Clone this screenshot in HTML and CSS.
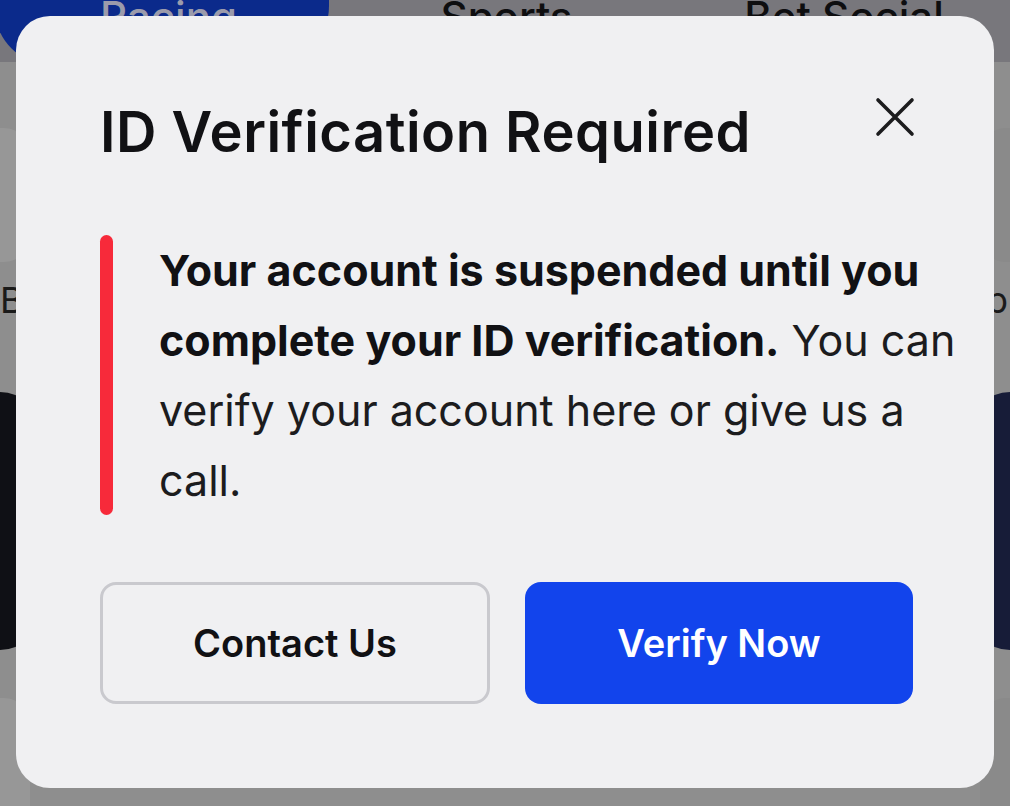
FILE: index.html
```html
<!DOCTYPE html>
<html lang="en">
<head>
<meta charset="utf-8">
<title>ID Verification Required</title>
<link rel="stylesheet" href="styles.css">
</head>
<body>
<div class="app">
  <div class="tabs">
    <div class="tab tab-active">Racing</div>
    <div class="tab">Sports</div>
    <div class="tab tab-wide">Bet Social</div>
  </div>
  <div class="cards">
    <div class="tile tile-left"></div>
    <div class="tile tile-right"><span class="tile-icon"></span></div>
  </div>
  <div class="labels">
    <span class="label label-left">Be</span>
    <span class="label label-right">b</span>
  </div>
  <div class="banners">
    <div class="banner banner-left"></div>
    <div class="banner banner-right"></div>
  </div>
  <div class="cards cards-bottom">
    <div class="tile tile-left"></div>
    <div class="tile tile-right"></div>
  </div>
</div>

<div class="modal" role="dialog" aria-labelledby="modal-title">
  <div class="modal-head">
    <h1 class="modal-title" id="modal-title">ID Verification Required</h1>
    <button class="close" aria-label="Close">
      <svg width="40" height="40" viewBox="0 0 40 40" aria-hidden="true">
        <path d="M3 3 L37 37 M37 3 L3 37" stroke="#1c1c1e" stroke-width="3.6" stroke-linecap="round" fill="none"/>
      </svg>
    </button>
  </div>
  <div class="notice">
    <div class="notice-bar"></div>
    <p class="notice-text"><strong>Your account is suspended until you<br>complete your ID verification.</strong> You can<br>verify your account here or give us a<br>call.</p>
  </div>
  <div class="actions">
    <button class="btn btn-outline">Contact Us</button>
    <button class="btn btn-primary">Verify Now</button>
  </div>
</div>
</body>
</html>
```

FILE: styles.css
```css
* { box-sizing: border-box; }

html, body {
  margin: 0;
  padding: 0;
}

body {
  width: 1010px;
  height: 806px;
  overflow: hidden;
  background: #8e8e8e;
  font-family: Inter, "Noto Sans", "Liberation Sans", sans-serif;
  position: relative;
}

/* dimmed app behind the sheet */
.app {
  width: 1010px;
  height: 806px;
  display: flex;
  flex-direction: column;
}

.tabs {
  height: 62px;
  background: #78777c;
  display: flex;
  align-items: flex-start;
  overflow: hidden;
  flex-shrink: 0;
}

.tab {
  width: 335px;
  height: 96px;
  margin-top: -30px;
  padding-top: 22px;
  text-align: center;
  font-size: 42px;
  font-weight: 500;
  color: #0e0e10;
  line-height: 50px;
}

.tab:nth-child(2) { padding-left: 20px; }

.tab-active {
  background: #0b2a8b;
  color: #9b9bab;
  border-radius: 0 0 60px 60px;
  margin-left: -6px;
  padding-left: 14px;
}

.tab-wide { flex: 1; padding-left: 14px; }

.cards {
  display: flex;
  justify-content: space-between;
  margin-top: 66px;
  height: 134px;
}

.tile {
  width: 300px;
  height: 134px;
  background: #979797;
  border-radius: 26px;
}

.tile-left { margin-left: -270px; }
.tile-right {
  margin-right: -270px;
  background: #8a8a8a;
  padding: 30px 0 0 0;
}

.tile-icon {
  display: block;
  width: 12px;
  height: 58px;
  margin-top: 20px;
  margin-left: -2px;
  border: 2px solid #2a2a2a;
  border-left: none;
  border-radius: 0 2px 2px 0;
}

.labels {
  display: flex;
  justify-content: space-between;
  height: 80px;
  font-size: 36px;
  line-height: 76px;
  color: #1a1a1a;
}

.label-left { margin-left: 0; }
.label-right { margin-right: 2px; }

.banners {
  display: flex;
  justify-content: space-between;
  height: 258px;
  margin-top: 54px;
}

.banner {
  width: 300px;
  height: 258px;
  border-radius: 40px;
}

.banner-left { background: #0f1015; margin-left: -260px; }
.banner-right { background: #171c38; margin-right: -260px; }

.cards-bottom { margin-top: 48px; }

/* modal sheet */
.modal {
  position: absolute;
  left: 16px;
  top: 16px;
  width: 978px;
  height: 772px;
  background: #f0f0f2;
  border-radius: 34px;
  padding: 0 82px 0 84px;
  display: flex;
  flex-direction: column;
  color: #1c1c1e;
}

.modal-head {
  display: flex;
  justify-content: space-between;
  align-items: flex-start;
  padding-top: 83px;
}

.modal-title {
  margin: 0;
  font-size: 56px;
  line-height: 66px;
  font-weight: 600;
  letter-spacing: 0.5px;
  color: #111114;
}

.close {
  border: 0;
  background: none;
  padding: 0;
  margin: -2px -3px 0 0;
  width: 40px;
  height: 40px;
  display: flex;
}

.notice {
  display: flex;
  gap: 46px;
  margin-top: 70px;
  margin-right: -50px;
}

.notice-bar {
  width: 13px;
  flex-shrink: 0;
  background: #f72a3a;
  border-radius: 7px;
}

.notice-text {
  margin: 0;
  font-size: 43px;
  line-height: 70px;
  font-weight: 400;
  color: #1c1c1e;
}

.notice-text strong { font-weight: 700; color: #111114; }

.actions {
  display: grid;
  grid-template-columns: 390px 388px;
  gap: 35px;
  margin-top: 67px;
}

.btn {
  height: 122px;
  border-radius: 16px;
  font-family: inherit;
  font-size: 38px;
  font-weight: 600;
  padding: 0;
}

.btn-outline {
  background: transparent;
  border: 3px solid #c9c9ce;
  color: #111114;
}

.btn-primary {
  background: #1244ec;
  border: 0;
  color: #ffffff;
}
```
